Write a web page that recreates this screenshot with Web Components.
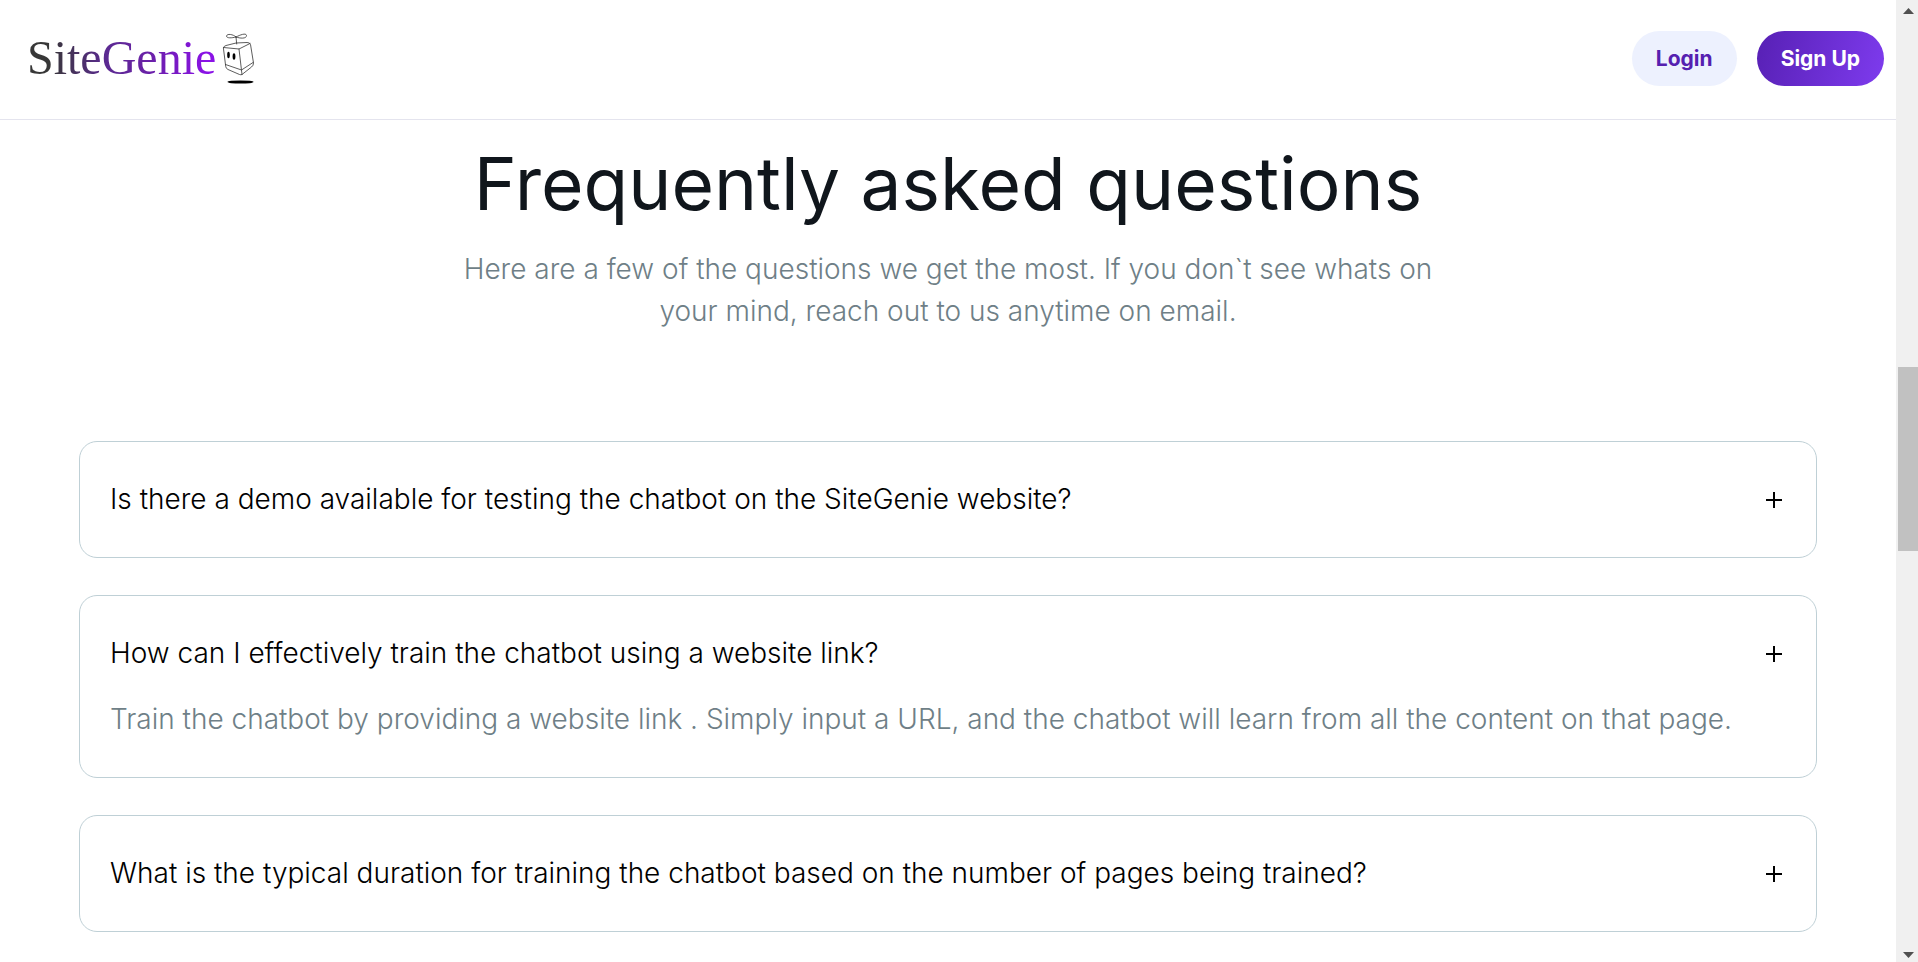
<!DOCTYPE html>
<html lang="en">
<head>
<meta charset="utf-8">
<meta name="viewport" content="width=device-width, initial-scale=1">
<title>SiteGenie</title>
<style>
  body { margin: 0; background: #fff; font-family: Inter, "Liberation Sans", sans-serif; }
</style>
</head>
<body>
<genie-app>
  <genie-header></genie-header>
  <faq-section>
    <span slot="title">Frequently asked questions</span>
    <span slot="intro">Here are a few of the questions we get the most. If you don`t see whats on your mind, reach out to us anytime on email.</span>
    <faq-item>Is there a demo available for testing the chatbot on the SiteGenie website?</faq-item>
    <faq-item open>How can I effectively train the chatbot using a website link?<span slot="answer">Train the chatbot by providing a website link . Simply input a URL, and the chatbot will learn from all the content on that page.</span></faq-item>
    <faq-item>What is the typical duration for training the chatbot based on the number of pages being trained?</faq-item>
  </faq-section>
</genie-app>

<script>
class BaseElement extends HTMLElement {
  constructor() {
    super();
    this.attachShadow({ mode: "open" }).innerHTML = this.constructor.markup;
  }
}

class GenieApp extends BaseElement {
  static markup = `
    <style>
      :host { display: grid; grid-template-columns: minmax(0, 1fr) 22px; height: 100vh; overflow: hidden; }
      .view { overflow: hidden; }
    </style>
    <div class="view"><slot></slot></div>
    <scroll-rail></scroll-rail>`;
}

class ScrollRail extends BaseElement {
  static markup = `
    <style>
      :host { display: grid; grid-template-rows: 22px minmax(0, 345fr) minmax(0, 184fr) minmax(0, 389fr) 22px; background: #f0f0f0; }
      .thumb { grid-row: 3; margin-left: 2px; background: #c1c1c1; }
      svg { display: block; fill: #505050; }
      .down { grid-row: 5; }
    </style>
    <svg width="22" height="22" aria-hidden="true"><path d="M7 14L12.500 8L18 14Z"/></svg>
    <div class="thumb"></div>
    <svg class="down" width="22" height="22" aria-hidden="true"><path d="M7 12L12.500 18L18 12Z"/></svg>`;
}

class GenieLogo extends BaseElement {
  static markup = `
    <style>
      :host { display: block; }
      a { display: flex; align-items: center; gap: 6px; text-decoration: none; }
      .name {
        font: 48px/56px "Liberation Serif", serif;
        background: linear-gradient(90deg, #373737 12%, #5b2a91 42%, #6a20a8 65%, #8a12e6 95%);
        -webkit-background-clip: text; background-clip: text; color: transparent;
      }
      svg { display: block; }
    </style>
    <a href="#">
      <span class="name">SiteGenie</span>
      <svg width="34" height="52" viewBox="0 0 34 52" fill="none" stroke="#333" stroke-width=".8" stroke-linejoin="round" stroke-linecap="round" aria-hidden="true">
        <path d="M14 5C11 2 5 1.500 4.500 4C4.500 6.500 10 6 14 5C18 3 24 .5 24.500 3.500C24.500 7 18 6.500 14 5Z"/>
        <path d="M14 5L14.700 12"/>
        <path d="M1.500 15.500Q2 14 4 13.500L14 11L25 10.500Q28 10.500 28.500 12.500L31.500 31Q31.500 33.500 29.500 35L20 42.500Q19 43 17.500 42.500L6 37.500Q4 36.500 3.800 35ZM1.500 15.500L17 17L28 11.500M17 17L20 42.500M3.500 32.500L19.500 38L31 30.500"/>
        <g fill="#000" stroke="none"><ellipse cx="6.500" cy="23" rx="1.300" ry="3.200"/><ellipse cx="12" cy="24.500" rx="1.400" ry="3.300"/><ellipse cx="18.500" cy="50" rx="13" ry="1.600"/></g>
      </svg>
    </a>`;
}

class PillButton extends BaseElement {
  static markup = `
    <style>
      :host { display: block; }
      button { display: block; height: 55px; padding: 2px 24px 0; border: 0; border-radius: 28px; background: #edf1fe; color: #5520b0; font: 700 21px/28px Inter, "Liberation Sans", sans-serif; cursor: pointer; }
      :host([primary]) button { background: linear-gradient(105deg, #5720b4, #7e3bee); color: #fff; }
    </style>
    <button type="button"><slot></slot></button>`;
}

class GenieHeader extends BaseElement {
  static markup = `
    <style>
      :host { display: block; }
      header { display: flex; align-items: center; justify-content: space-between; box-sizing: border-box; height: 120px; padding: 0 12px 3px 27px; border-bottom: 1px solid #e4e4ee; }
      nav { display: flex; gap: 20px; }
    </style>
    <header>
      <genie-logo></genie-logo>
      <nav aria-label="Account"><pill-button>Login</pill-button><pill-button primary>Sign Up</pill-button></nav>
    </header>`;
}

class FaqSection extends BaseElement {
  static markup = `
    <style>
      :host { display: block; }
      section { padding: 19px 79px 30px; }
      h2 { margin: 0; text-align: center; font-size: 73px; line-height: 90px; font-weight: 400; color: #10161c; }
      p { max-width: 1000px; margin: 19px auto 109px; text-align: center; font-size: 28px; line-height: 42px; font-weight: 300; color: #6f7f87; }
      .list { display: grid; gap: 37px; }
    </style>
    <section>
      <h2><slot name="title"></slot></h2>
      <p><slot name="intro"></slot></p>
      <div class="list"><slot></slot></div>
    </section>`;
}

class FaqItem extends BaseElement {
  static markup = `
    <style>
      :host { display: block; padding: 36px 34px 36px 30px; border: 1px solid #bfd0d6; border-radius: 18px; font-size: 28px; line-height: 43px; font-weight: 300; }
      h3 { margin: 0; font: inherit; }
      button { display: flex; align-items: center; justify-content: space-between; gap: 24px; width: 100%; padding: 0; border: 0; background: none; color: #000; font: inherit; text-align: left; cursor: pointer; }
      svg { flex: none; display: block; }
      .answer { margin-top: 23px; color: #6f7f87; }
      :host(:not([open])) .answer { display: none; }
    </style>
    <h3><button type="button"><span><slot></slot></span>
      <svg width="16" height="16" aria-hidden="true"><path d="M8 0V16M0 8H16" stroke="#000" stroke-width="2"/></svg></button></h3>
    <div class="answer"><slot name="answer"></slot></div>`;
  connectedCallback() {
    const button = this.shadowRoot.querySelector("button");
    const sync = () => button.setAttribute("aria-expanded", this.hasAttribute("open"));
    button.onclick = () => { this.toggleAttribute("open"); sync(); };
    sync();
  }
}

customElements.define("scroll-rail", ScrollRail);
customElements.define("genie-logo", GenieLogo);
customElements.define("pill-button", PillButton);
customElements.define("genie-header", GenieHeader);
customElements.define("faq-item", FaqItem);
customElements.define("faq-section", FaqSection);
customElements.define("genie-app", GenieApp);
</script>
</body>
</html>
